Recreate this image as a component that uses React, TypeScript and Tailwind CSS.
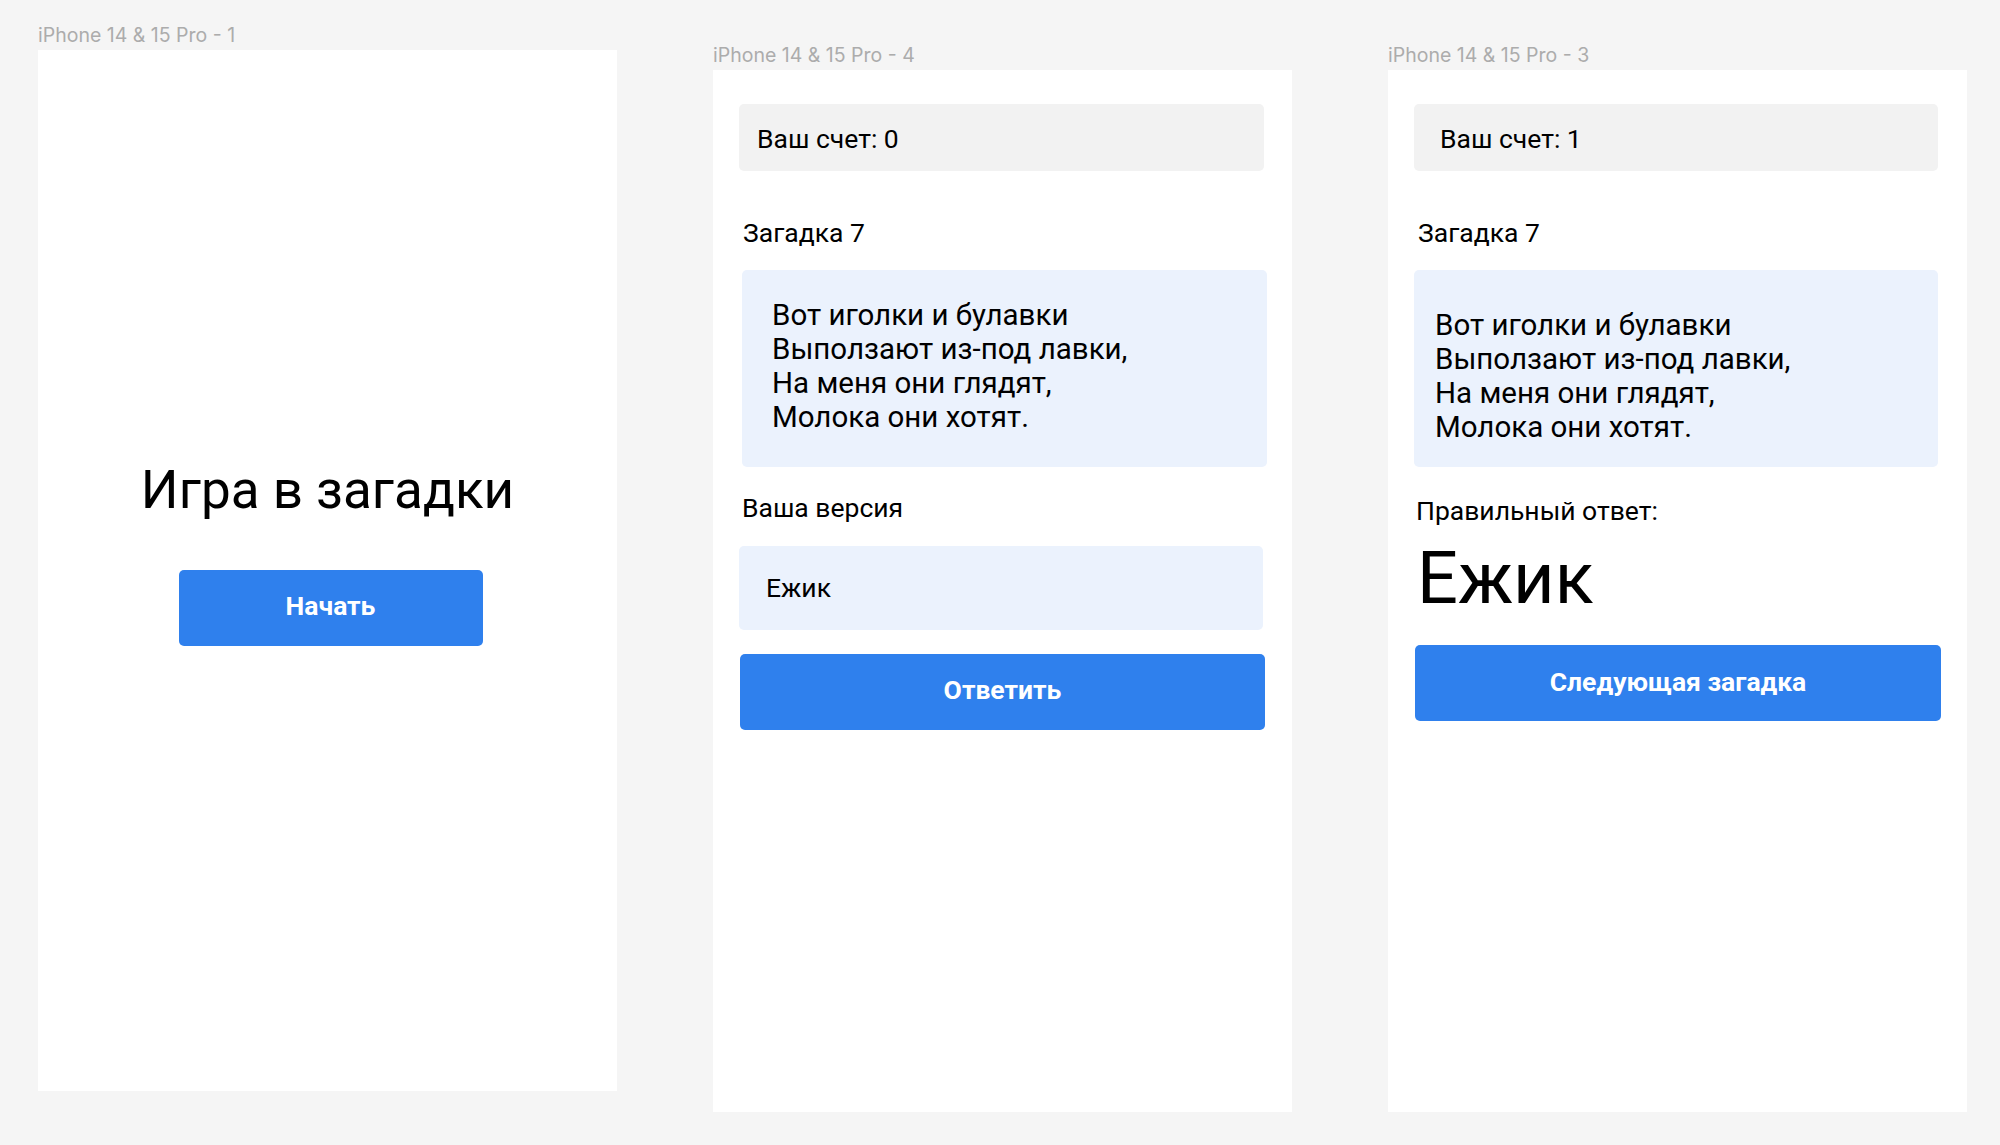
import React from "react";

const riddle = [
  "Вот иголки и булавки",
  "Выползают из-под лавки,",
  "На меня они глядят,",
  "Молока они хотят.",
];

const FrameLabel: React.FC<{ children: React.ReactNode }> = ({ children }) => (
  <div className="h-[22px] mb-[4px] text-[19.5px] leading-[22px] text-[#acacac] font-['Inter',sans-serif] whitespace-nowrap">
    {children}
  </div>
);

const Button: React.FC<{ children: React.ReactNode; className?: string }> = ({
  children,
  className = "",
}) => (
  <button
    className={`h-[76px] rounded-[5px] bg-[#2f80ed] text-white text-[26.5px] font-bold flex items-center justify-center ${className}`}
  >
    {children}
  </button>
);

const App: React.FC = () => {
  return (
    <div className="w-[2000px] h-[1145px] bg-[#f5f5f5] font-['Roboto',sans-serif] text-black overflow-hidden">
      <div className="flex items-start gap-[96px] pl-[38px]">
        {/* Start screen */}
        <div className="mt-[24px]">
          <FrameLabel>iPhone 14 &amp; 15 Pro - 1</FrameLabel>
          <div className="w-[579px] h-[1041px] bg-white flex flex-col items-center pt-[409px]">
            <h1 className="text-[53px] leading-[62px] font-normal">Игра в загадки</h1>
            <Button className="w-[304px] mt-[49px] ml-[6px] pb-[4px]">Начать</Button>
          </div>
        </div>

        {/* Question screen */}
        <div className="mt-[44px]">
          <FrameLabel>iPhone 14 &amp; 15 Pro - 4</FrameLabel>
          <div className="w-[579px] h-[1042px] bg-white px-[26px] pt-[34px]">
            <div className="w-[525px] h-[67px] rounded-[5px] bg-[#f2f2f2] flex items-center pl-[18px] pt-[3px] text-[26.5px]">
              Ваш счет: 0
            </div>
            <div className="mt-[47px] pl-[4px] text-[26.5px] leading-[30px]">Загадка 7</div>
            <div className="mt-[22px] ml-[3px] w-[525px] h-[197px] rounded-[5px] bg-[#ebf2fd] pl-[30px] pt-[28px] text-[29.5px] leading-[34px]">
              {riddle.map((line) => (
                <div key={line}>{line}</div>
              ))}
            </div>
            <div className="mt-[26px] pl-[3px] text-[26.5px] leading-[30px]">Ваша версия</div>
            <div className="mt-[23px] w-[524px] h-[84px] rounded-[5px] bg-[#ebf2fd] flex items-center pl-[27px] text-[26.5px]">
              Ежик
            </div>
            <Button className="mt-[24px] ml-[1px] w-[525px] pb-[4px]">Ответить</Button>
          </div>
        </div>

        {/* Answer screen */}
        <div className="mt-[44px]">
          <FrameLabel>iPhone 14 &amp; 15 Pro - 3</FrameLabel>
          <div className="w-[579px] h-[1042px] bg-white px-[26px] pt-[34px]">
            <div className="w-[524px] h-[67px] rounded-[5px] bg-[#f2f2f2] flex items-center pl-[26px] pt-[3px] text-[26.5px]">
              Ваш счет: 1
            </div>
            <div className="mt-[47px] pl-[4px] text-[26.5px] leading-[30px]">Загадка 7</div>
            <div className="mt-[22px] w-[524px] h-[197px] rounded-[5px] bg-[#ebf2fd] pl-[21px] pt-[38px] text-[29.5px] leading-[34px]">
              {riddle.map((line) => (
                <div key={line}>{line}</div>
              ))}
            </div>
            <div className="mt-[29px] pl-[2px] text-[26.5px] leading-[30px]">Правильный ответ:</div>
            <div className="mt-[13px] pl-[3px] text-[72px] leading-[80px]">Ежик</div>
            <Button className="mt-[26px] ml-[1px] w-[526px] pb-[2px]">Следующая загадка</Button>
          </div>
        </div>
      </div>
    </div>
  );
};

export default App;
